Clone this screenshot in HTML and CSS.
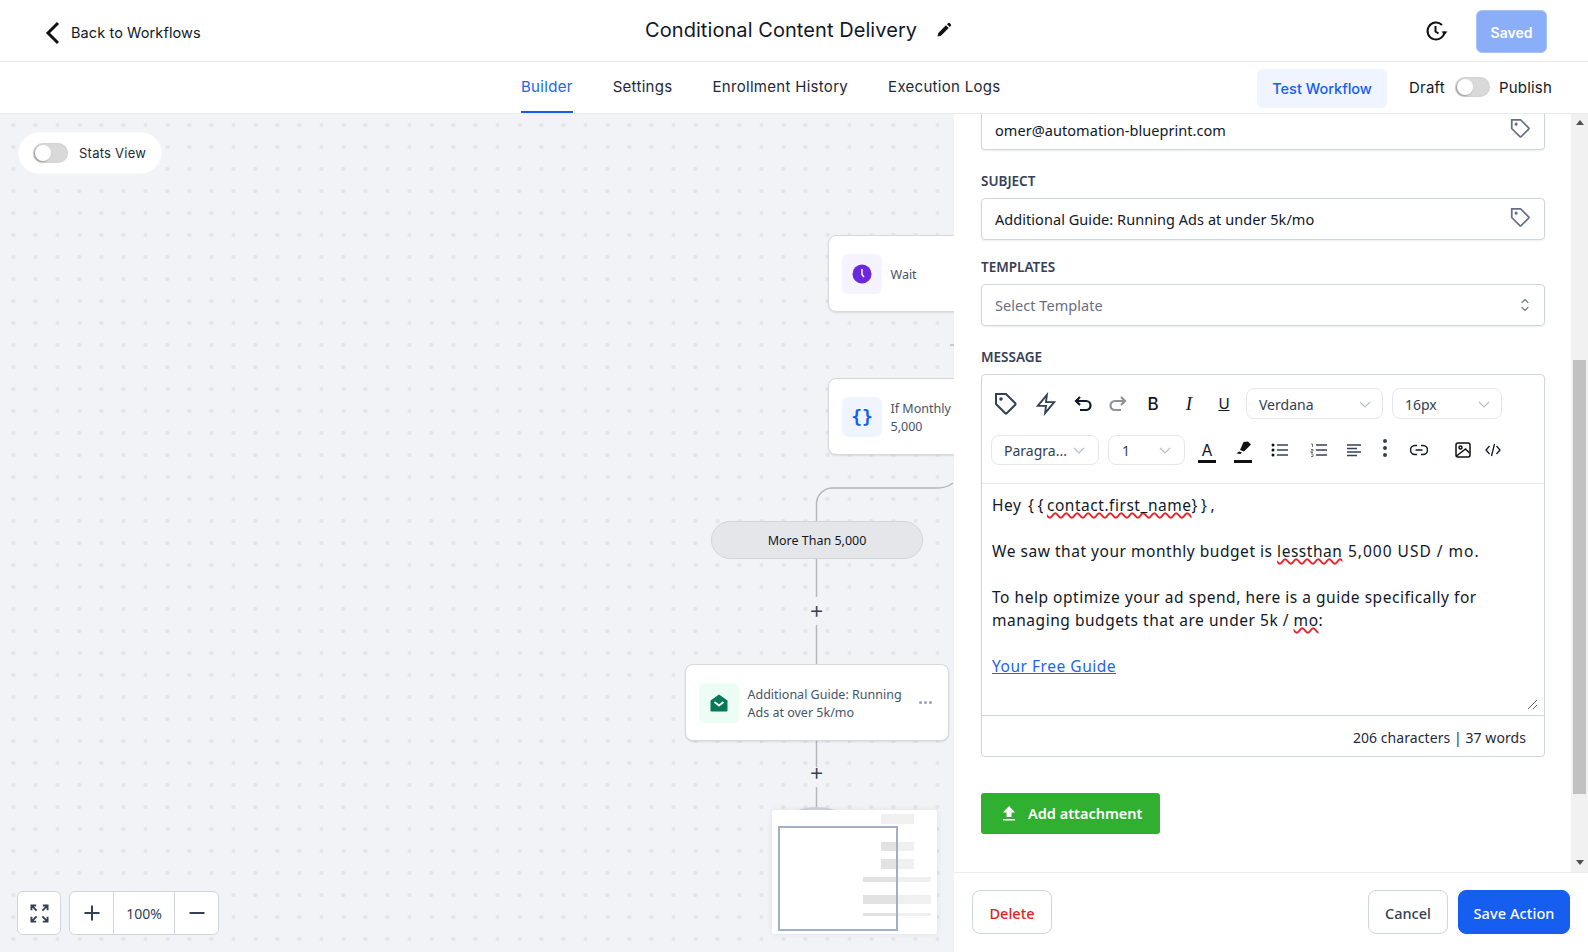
FILE: index.html
```html
<!DOCTYPE html>
<html>
<head>
	<title>Conditional Content Delivery</title>
	<link rel="stylesheet" href="styles.css">
</head>
<body>
	<header class="topbar">
		<a class="back">
			<svg width="18" height="24" viewBox="0 0 18 24" fill="none" stroke="#111" stroke-width="3"><path d="M14 2 4 12l10 10"/></svg>
			<span>Back to Workflows</span>
		</a>
		<div class="title-wrap">
			<span class="title">Conditional Content Delivery</span>
			<svg width="16" height="16" viewBox="0 0 16 16" fill="#111"><path d="M1.5 14.5 2.3 11 10 3.3l2.7 2.7L5 13.700z"/><path d="M11 2.300l1.200-1.200a1 1 0 0 1 1.400 0l1.300 1.300a1 1 0 0 1 0 1.400L13.700 5z"/></svg>
		</div>
		<div class="top-actions">
			<svg width="24" height="24" viewBox="0 0 24 24" fill="none" stroke="#111" stroke-width="2"><path d="M20.500 12.500A8.500 8.500 0 1 1 18 6"/><path d="M11.500 7v5.500l3 2"/><path d="M17.500 12.500h6l-3 3.500z" fill="#111" stroke="none"/></svg>
			<button class="btn-saved">Saved</button>
		</div>
	</header>

	<nav class="tabbar">
		<div class="tabs">
			<a class="tab active">Builder</a>
			<a class="tab">Settings</a>
			<a class="tab">Enrollment History</a>
			<a class="tab">Execution Logs</a>
		</div>
		<div class="tab-actions">
			<button class="btn-test">Test Workflow</button>
			<span class="draft">Draft</span>
			<span class="toggle"></span>
			<span class="publish">Publish</span>
		</div>
	</nav>

	<div class="main">
		<section class="canvas">
			<svg class="wires" width="954" height="838" viewBox="0 114 954 838" fill="none" stroke="#b4b7bd" stroke-width="1.500">
				<path d="M816.500 521V504a16 16 0 0 1 16-16H938c6 0 11-2 15-5"/>
				<path d="M816.500 559V597M816.500 625V664M816.500 741V767M816.500 787V808"/>
				<path d="M950 345h4"/>
			</svg>

			<div class="stats-pill">
				<span class="toggle"></span>
				<span>Stats View</span>
			</div>

			<div class="node node-wait">
				<span class="node-icon icon-purple">
					<svg width="20" height="20" viewBox="0 0 20 20"><circle cx="10" cy="10" r="9.500" fill="#6d28d9"/><path d="M10 5v5.500l2 2.500" fill="none" stroke="#fff" stroke-width="1.500"/></svg>
				</span>
				<span class="node-text">Wait</span>
			</div>

			<div class="node node-if">
				<span class="node-icon icon-blue">{}</span>
				<span class="node-text">If Monthly<br>5,000</span>
			</div>

			<div class="branch-pill">More Than 5,000</div>
			<span class="plus plus-one">+</span>

			<div class="node node-mail">
				<span class="node-icon icon-green">
					<svg width="18" height="18" viewBox="0 0 18 18"><path d="M0.500 6.500 9 0.500l8.500 6v10a1 1 0 0 1-1 1h-15a1 1 0 0 1-1-1z" fill="#047857"/><path d="M4.500 8 9 11.500 13.500 8" fill="none" stroke="#fff" stroke-width="1.800"/></svg>
				</span>
				<span class="node-text">Additional Guide: Running<br>Ads at over 5k/mo</span>
				<span class="node-menu">
					<i></i><i></i><i></i>
				</span>
			</div>
			<span class="plus plus-two">+</span>
			<span class="hidden-node"></span>

			<div class="minimap">
				<span class="mini-block b1"></span>
				<span class="mini-block b2"></span>
				<span class="mini-block b3"></span>
				<span class="mini-block b4"></span>
				<span class="mini-block b5"></span>
				<span class="mini-block b6"></span>
				<span class="mini-view"></span>
			</div>

			<div class="controls">
				<button class="ctrl ctrl-fit">
					<svg width="19" height="19" viewBox="0 0 20 20" fill="none" stroke="#344054" stroke-width="2"><path d="M1.500 6.500v-5h5M1.500 1.500l5.500 5.500M13.500 1.500h5v5M18.500 1.500 13 7M1.500 13.500v5h5M1.500 18.500 7 13M18.500 13.500v5h-5M18.500 18.500 13 13"/></svg>
				</button>
				<div class="zoom-group">
					<button class="ctrl-zoom">
						<svg width="16" height="16" viewBox="0 0 16 16" stroke="#344054" stroke-width="2"><path d="M8 0.500v15M0.500 8h15"/></svg>
					</button>
					<span class="zoom-val">100%</span>
					<button class="ctrl-zoom">
						<svg width="16" height="16" viewBox="0 0 16 16" stroke="#344054" stroke-width="2"><path d="M0.500 8h15"/></svg>
					</button>
				</div>
			</div>
		</section>

		<aside class="panel">
			<div class="panel-scroll">
				<div class="form">
					<div class="input input-cut">
						<span>omer@automation-blueprint.com</span>
						<svg class="tag" width="21" height="21" viewBox="0 0 24 24" fill="none" stroke="#667085" stroke-width="2"><path d="M12 2H2v10l9.300 9.300a1 1 0 0 0 1.400 0l8.600-8.600a1 1 0 0 0 0-1.400z"/><circle cx="7" cy="7" r="0.800" fill="#667085"/></svg>
					</div>
					<label class="field-label label-first">SUBJECT</label>
					<div class="input">
						<span>Additional Guide: Running Ads at under 5k/mo</span>
						<svg class="tag" width="21" height="21" viewBox="0 0 24 24" fill="none" stroke="#667085" stroke-width="2"><path d="M12 2H2v10l9.300 9.300a1 1 0 0 0 1.400 0l8.600-8.600a1 1 0 0 0 0-1.400z"/><circle cx="7" cy="7" r="0.800" fill="#667085"/></svg>
					</div>
					<label class="field-label">TEMPLATES</label>
					<div class="input input-select">
						<span class="placeholder">Select Template</span>
						<svg width="10" height="16" viewBox="0 0 12 18" fill="none" stroke="#667085" stroke-width="1.500"><path d="M2 6.500 6 2.500l4 4M2 11.500l4 4 4-4"/></svg>
					</div>
					<label class="field-label label-msg">MESSAGE</label>

					<div class="editor">
						<div class="toolbar">
							<div class="tool-row">
								<svg class="tool t-tag" width="24" height="24" viewBox="0 0 24 24" fill="none" stroke="#344054" stroke-width="2"><path d="M12 2H2v10l9.300 9.300a1 1 0 0 0 1.400 0l8.600-8.600a1 1 0 0 0 0-1.400z"/><circle cx="7" cy="7" r="0.800" fill="#344054"/></svg>
								<svg class="tool t-bolt" width="22" height="24" viewBox="0 0 24 24" fill="none" stroke="#344054" stroke-width="2"><path d="M13 2 3 14h9l-1 8 10-12h-9z"/></svg>
								<svg class="tool t-undo" width="20" height="20" viewBox="0 0 20 20" fill="none" stroke="#111827" stroke-width="2.200"><path d="M7 3 3 7l4 4M3 7h10a4.500 4.500 0 0 1 0 9H7"/></svg>
								<svg class="tool t-redo" width="20" height="20" viewBox="0 0 20 20" fill="none" stroke="#8e9196" stroke-width="2.200"><path d="M13 3l4 4-4 4M17 7H7a4.500 4.500 0 0 0 0 9h6"/></svg>
								<span class="tool-b">B</span>
								<span class="tool-i">I</span>
								<span class="tool-u">U</span>
								<span class="select sel-font">Verdana<svg class="chev" width="12" height="7" viewBox="0 0 12 7" fill="none" stroke="#b9bec7" stroke-width="1.200"><path d="M1 1l5 5 5-5"/></svg></span>
								<span class="select sel-size">16px<svg class="chev" width="12" height="7" viewBox="0 0 12 7" fill="none" stroke="#b9bec7" stroke-width="1.200"><path d="M1 1l5 5 5-5"/></svg></span>
							</div>
							<div class="tool-row row-two">
								<span class="select sel-para">Paragra...<svg class="chev" width="12" height="7" viewBox="0 0 12 7" fill="none" stroke="#b9bec7" stroke-width="1.200"><path d="M1 1l5 5 5-5"/></svg></span>
								<span class="select sel-line">1<svg class="chev" width="12" height="7" viewBox="0 0 12 7" fill="none" stroke="#b9bec7" stroke-width="1.200"><path d="M1 1l5 5 5-5"/></svg></span>
								<span class="tool-a">A</span>
								<span class="tool-mark">
									<svg width="18" height="14" viewBox="0 0 18 14" fill="#111"><path d="M9.500 1 14 0.500 17 3.500l-7 7-4-1.500zM5 10.500l3 1-1.500 1.500-4-0.500z"/></svg>
								</span>
								<svg class="tool t-list" width="18" height="14" viewBox="0 0 18 14"><circle cx="2" cy="2" r="1.500" fill="#111"/><circle cx="2" cy="7" r="1.500" fill="#111"/><circle cx="2" cy="12" r="1.500" fill="#111"/><path d="M6 2h11M6 7h11M6 12h11" stroke="#344054" stroke-width="1.500"/></svg>
								<svg class="tool t-num" width="18" height="14" viewBox="0 0 18 14"><path d="M1 1h1.500v3M1 6.500h2v1.500H1v1.500h2M1 11h2v2.500H1" fill="none" stroke="#555" stroke-width="0.800"/><path d="M6 2h11M6 7h11M6 12h11" stroke="#344054" stroke-width="1.500"/></svg>
								<svg class="tool t-align" width="16" height="14" viewBox="0 0 16 14" stroke="#344054" stroke-width="1.500"><path d="M1 2h14M1 5.500h10M1 9h14M1 12.500h10"/></svg>
								<svg class="tool t-dots" width="6" height="18" viewBox="0 0 6 18" fill="#344054"><circle cx="3" cy="2" r="2"/><circle cx="3" cy="9" r="2"/><circle cx="3" cy="16" r="2"/></svg>
								<svg class="tool t-link" width="18" height="12" viewBox="0 0 18 12" fill="none" stroke="#111827" stroke-width="1.500"><path d="M7 1.500H5a4.500 4.500 0 0 0 0 9h2M11 1.500h2a4.500 4.500 0 0 1 0 9h-2M5.500 6h7"/></svg>
								<svg class="tool t-image" width="16" height="16" viewBox="0 0 16 16" fill="none" stroke="#111" stroke-width="1.500"><rect x="1" y="1" width="14" height="14" rx="2"/><circle cx="5.500" cy="5.500" r="1.500"/><path d="M1.500 14 10.500 7l4 4"/></svg>
								<svg class="tool t-code" width="16" height="14" viewBox="0 0 16 14" fill="none" stroke="#111827" stroke-width="1.300"><path d="M4.500 3 1 7l3.500 4M11.500 3 15 7l-3.500 4M9.500 1l-3 12"/></svg>
							</div>
						</div>
						<div class="editor-body">
							<p>Hey <span class="braces first">{{</span><span class="typo">contact.first_name</span><span class="braces">}},</span></p>
							<p>&nbsp;</p>
							<p>We saw that your monthly budget is <span class="typo">lessthan</span> <span class="wide">5,000 USD / mo.</span></p>
							<p>&nbsp;</p>
							<p>To help optimize your ad spend, here is a guide specifically for<br>managing budgets that are under 5k / <span class="typo">mo</span>:</p>
							<p>&nbsp;</p>
							<p><a class="editor-link">Your Free Guide</a></p>
							<svg class="resize" width="12" height="12" viewBox="0 0 12 12" stroke="#666" stroke-width="1"><path d="M2 11 11 2M7 11l4-4"/></svg>
						</div>
						<div class="counter">206 characters | 37 words</div>
					</div>

					<button class="btn-attach">
						<svg width="14" height="16" viewBox="0 0 14 16" fill="#fff"><path d="M7 1 1 7.500h3.500V12h5V7.500H13zM1 14h12v1.500H1z"/></svg>
						Add attachment
					</button>
				</div>
				<div class="scrollbar">
					<span class="arrow-up"></span>
					<span class="thumb"></span>
					<span class="arrow-down"></span>
				</div>
			</div>
			<footer class="panel-foot">
				<button class="btn-delete">Delete</button>
				<div class="foot-right">
					<button class="btn-cancel">Cancel</button>
					<button class="btn-save">Save Action</button>
				</div>
			</footer>
		</aside>
	</div>
</body>
</html>
```

FILE: styles.css
```css
html, body {
	margin: 0;
	padding: 0;
	width: 1588px;
	height: 952px;
	overflow: hidden;
	background: #fff;
	font-family: "Inter", sans-serif;
	color: #111827;
}
button {
	font-family: inherit;
	cursor: pointer;
}

/* top bar */
.topbar {
	height: 61px;
	border-bottom: 1px solid #e9eaec;
	display: flex;
	align-items: center;
	justify-content: space-between;
	padding: 0 41px 0 44px;
	position: relative;
}
.back {
	display: flex;
	align-items: center;
	gap: 9px;
	margin-top: 4px;
	font-size: 14.500px;
	letter-spacing: 0.1px;
}
.title-wrap {
	position: absolute;
	left: 645px;
	top: 17px;
	display: flex;
	align-items: center;
	gap: 19px;
}
.title {
	font-size: 20px;
	line-height: 26px;
	letter-spacing: 0.07px;
}
.top-actions {
	display: flex;
	align-items: center;
	gap: 28px;
}
.btn-saved {
	width: 71px;
	height: 43px;
	margin-top: 2px;
	border: 1px solid #a9c3f9;
	border-radius: 6px;
	background: #8aaef8;
	color: #fff;
	font-size: 14px;
	font-weight: 600;
	padding-top: 3px;
}

/* tabs */
.tabbar {
	height: 51px;
	border-bottom: 1px solid #e9eaec;
	display: flex;
	justify-content: space-between;
	padding: 0 36px 0 521px;
}
.tabs {
	display: flex;
	gap: 40px;
}
.tab {
	font-size: 15px;
	letter-spacing: 0.3px;
	padding-top: 15px;
	height: 36px;
	color: #1d2939;
}
.tab.active {
	color: #2563eb;
	border-bottom: 2px solid #155eef;
	height: 34px;
}
.tab-actions {
	display: flex;
	align-items: center;
	height: 50px;
}
.btn-test {
	width: 130px;
	height: 39px;
	margin: 3px 22px 0 0;
	border: none;
	border-radius: 6px;
	background: #eff4ff;
	color: #155eef;
	font-size: 14.500px;
	font-weight: 500;
}
.draft, .publish {
	font-size: 15px;
	letter-spacing: 0.2px;
}
.tab-actions .toggle {
	margin: 0 9px 0 10px;
}
.toggle {
	display: inline-block;
	position: relative;
	width: 35px;
	height: 20px;
	border-radius: 10px;
	background: #d9d9d9;
	box-shadow: inset 0 0 2px rgba(0,0,0,.1);
	flex: none;
}
.toggle::after {
	content: "";
	position: absolute;
	left: 2px;
	top: 2px;
	width: 16px;
	height: 16px;
	border-radius: 50%;
	background: #fff;
	box-shadow: -1px 1px 2px rgba(0,0,0,.3);
}

.main {
	display: flex;
	height: 838px;
}

/* canvas */
.canvas {
	position: relative;
	width: 954px;
	flex: none;
	overflow: hidden;
	background-color: #f2f3f7;
	background-image: radial-gradient(circle, #e3e4e8 1.500px, transparent 2.500px);
	background-size: 22px 22px;
	background-position: 2.500px 0;
}
.wires {
	position: absolute;
	left: 0;
	top: 0;
}
.stats-pill {
	position: absolute;
	left: 18px;
	top: 18px;
	width: 144px;
	height: 42px;
	box-sizing: border-box;
	padding-left: 14px;
	display: flex;
	align-items: center;
	gap: 11px;
	background: #fff;
	border: 1px solid #fafbfc;
	border-radius: 21px;
	font-size: 13px;
	letter-spacing: 0.25px;
	color: #1d2939;
}
.node {
	position: absolute;
	height: 77px;
	box-sizing: border-box;
	display: flex;
	align-items: center;
	padding-left: 13px;
	gap: 8.500px;
	background: #fff;
	border: 1px solid #d6d8dc;
	border-radius: 8px;
	box-shadow: 0 1px 2px rgba(16,24,40,.1);
	font-family: "Noto Sans", sans-serif;
	font-size: 12.500px;
	line-height: 18px;
	color: #475467;
}
.node-text {
	padding-top: 2px;
}
.node-wait { left: 828px; top: 121px; width: 140px; }
.node-if { left: 828px; top: 264px; width: 140px; }
.node-mail { left: 685px; top: 550px; width: 264px; }
.node-icon {
	width: 40px;
	height: 40px;
	border-radius: 6px;
	flex: none;
	display: flex;
	align-items: center;
	justify-content: center;
}
.icon-purple { background: #f5f3ff; }
.icon-blue {
	background: #eff4ff;
	color: #155eef;
	font-family: "DejaVu Sans Mono", monospace;
	font-size: 18px;
	font-weight: bold;
}
.icon-green { background: #ecfdf5; }
.node-menu {
	position: absolute;
	left: 233px;
	top: 36px;
	display: flex;
	gap: 2px;
}
.node-menu i {
	width: 3px;
	height: 3px;
	border-radius: 50%;
	background: #98a2b3;
}
.branch-pill {
	position: absolute;
	left: 711px;
	top: 407px;
	width: 212px;
	height: 38px;
	box-sizing: border-box;
	border: 1px solid #d2d5da;
	border-radius: 19px;
	background: #e5e6ea;
	font-family: "Noto Sans", sans-serif;
	font-size: 12.500px;
	line-height: 37px;
	text-align: center;
	color: #101828;
}
.plus {
	position: absolute;
	left: 806px;
	width: 21px;
	text-align: center;
	font-size: 24px;
	line-height: 24px;
	font-weight: 300;
	color: #344054;
}
.plus-one { top: 484px; }
.plus-two { top: 646px; }
.hidden-node {
	position: absolute;
	left: 795px;
	top: 693px;
	width: 43px;
	height: 14px;
	border-radius: 50% 50% 0 0;
	background: #d0d3d9;
}
.minimap {
	position: absolute;
	left: 772px;
	top: 696px;
	width: 165px;
	height: 124px;
	background: #fff;
	border-radius: 3px;
	box-shadow: 0 0 6px rgba(16,24,40,.08);
}
.mini-block {
	position: absolute;
}
.b1 { left: 109px; top: 4px; width: 33px; height: 10px; background: #f0f0f0; }
.b2 { left: 109px; top: 32px; width: 33px; height: 9px; background: linear-gradient(90deg, #e2e2e2 16px, #f0f0f0 16px); }
.b3 { left: 109px; top: 49px; width: 33px; height: 10px; background: linear-gradient(90deg, #e2e2e2 16px, #f0f0f0 16px); }
.b4 { left: 91px; top: 67px; width: 68px; height: 5px; background: linear-gradient(90deg, #e2e2e2 34px, #f0f0f0 34px); }
.b5 { left: 91px; top: 85px; width: 68px; height: 9px; background: linear-gradient(90deg, #e2e2e2 34px, #f0f0f0 34px); }
.b6 { left: 91px; top: 103px; width: 68px; height: 3px; background: linear-gradient(90deg, #e2e2e2 34px, #f0f0f0 34px); }
.mini-view {
	position: absolute;
	left: 6px;
	top: 16px;
	width: 120px;
	height: 105px;
	box-sizing: border-box;
	border: 2px solid #a3afc4;
}
.controls {
	position: absolute;
	left: 17px;
	top: 777px;
	display: flex;
	gap: 8px;
}
.ctrl-fit {
	width: 44px;
	height: 44px;
	padding: 0;
	display: flex;
	align-items: center;
	justify-content: center;
	background: #fff;
	border: 1px solid #d0d5dd;
	border-radius: 6px;
}
.zoom-group {
	display: flex;
	height: 44px;
	box-sizing: border-box;
	background: #fff;
	border: 1px solid #d0d5dd;
	border-radius: 6px;
}
.ctrl-zoom {
	width: 43px;
	padding: 0;
	border: none;
	background: none;
	display: flex;
	align-items: center;
	justify-content: center;
}
.zoom-val {
	width: 60px;
	border-left: 1px solid #d0d5dd;
	border-right: 1px solid #d0d5dd;
	font-family: "Noto Sans", sans-serif;
	font-size: 14px;
	line-height: 44px;
	text-align: center;
	color: #344054;
}

/* right panel */
.panel {
	width: 634px;
	flex: none;
	display: flex;
	flex-direction: column;
	background: #fff;
	font-family: "Noto Sans", sans-serif;
}
.panel-scroll {
	height: 758px;
	display: flex;
}
.form {
	width: 617px;
	box-sizing: border-box;
	padding: 0 26px 0 27px;
	overflow: hidden;
}
.input {
	height: 42px;
	box-sizing: border-box;
	display: flex;
	align-items: center;
	justify-content: space-between;
	padding: 0 13px;
	border: 1px solid #d0d5dd;
	border-radius: 4px;
	box-shadow: 0 1px 2px rgba(16,24,40,.08);
	font-size: 14.500px;
	letter-spacing: 0.05px;
	color: #101828;
}
.input-cut {
	height: 36px;
	padding-bottom: 3px;
	border-top: none;
	border-radius: 0 0 4px 4px;
}
.input-select {
	padding-right: 14px;
}
.tag {
	margin-bottom: 4px;
}
.placeholder {
	color: #667085;
}
.field-label {
	display: block;
	margin: 18px 0 8px;
	font-size: 13.500px;
	line-height: 18px;
	font-weight: 600;
	color: #344054;
}
.label-first, .label-msg {
	margin-top: 22px;
}
.editor {
	height: 383px;
	box-sizing: border-box;
	border: 1px solid #d0d5dd;
	border-radius: 4px;
	display: flex;
	flex-direction: column;
}
.toolbar {
	height: 109px;
	flex: none;
	box-sizing: border-box;
	border-bottom: 1px solid #e9eaec;
	padding: 13px 0 0 9px;
}
.tool-row {
	display: flex;
	align-items: center;
	height: 31px;
}
.row-two {
	margin-top: 16px;
	height: 30px;
}
.tool {
	flex: none;
}
.t-tag { margin-left: 3px; }
.t-bolt { margin-left: 17px; }
.t-undo { margin-left: 16px; }
.t-redo { margin-left: 15px; }
.tool-b, .tool-i, .tool-u {
	width: 18px;
	margin-left: 16px;
	text-align: center;
	font-family: "Inter", sans-serif;
	font-size: 17px;
	font-weight: 500;
}
.tool-b { margin-left: 16px; }
.tool-i {
	margin-left: 18px;
	font-family: "Liberation Serif", serif;
	font-style: italic;
	font-size: 19px;
}
.tool-u {
	margin-left: 17px;
	text-decoration: underline;
	font-size: 15px;
	font-weight: 400;
}
.select {
	display: flex;
	align-items: center;
	justify-content: space-between;
	box-sizing: border-box;
	height: 100%;
	padding: 0 13px 0 12px;
	border: 1px solid #e4e7ec;
	border-radius: 8px;
	font-size: 14px;
	color: #344054;
}
.sel-font { width: 137px; margin-left: 13px; padding: 1px 11px 0 12px; }
.sel-size { width: 110px; margin-left: 9px; padding: 1px 11px 0 12px; }
.sel-para { width: 108px; }
.sel-line { width: 77px; margin-left: 9px; padding-left: 13px; }
.tool-a {
	width: 18px;
	margin-left: 13px;
	text-align: center;
	font-family: "Inter", sans-serif;
	font-size: 16px;
	line-height: 19px;
	border-bottom: 3px solid #111;
	margin-top: 4px;
}
.tool-mark {
	width: 18px;
	margin-left: 18px;
	height: 19px;
	border-bottom: 3px solid #111;
	margin-top: 4px;
	line-height: 0;
}
.t-list { margin-left: 19px; }
.t-num { margin-left: 21px; }
.t-align { margin-left: 18px; }
.t-dots { margin: -4px 0 0 20px; }
.t-link { margin-left: 22px; }
.t-image { margin-left: 27px; }
.t-code { margin-left: 14px; }
.editor-body {
	position: relative;
	flex: 1;
	padding: 10px 10px 0;
	font-size: 15.500px;
	line-height: 23px;
	letter-spacing: 0.530px;
	color: #111827;
}
.editor-body p {
	margin: 0;
}
.braces {
	letter-spacing: 3.600px;
}
.braces.first {
	margin-left: 2px;
}
.wide {
	margin-left: 1px;
	letter-spacing: 1px;
}
.typo {
	text-decoration: underline wavy #e5252a 1.500px;
	text-underline-offset: 1px;
}
.editor-link {
	color: #2563eb;
	text-decoration: underline;
}
.resize {
	position: absolute;
	right: 6px;
	bottom: 5px;
}
.counter {
	height: 40px;
	flex: none;
	border-top: 1px solid #d0d5dd;
	padding-right: 18px;
	font-size: 14px;
	letter-spacing: 0.07px;
	line-height: 44px;
	text-align: right;
	color: #1f2937;
}
.btn-attach {
	display: flex;
	align-items: center;
	gap: 12px;
	margin-top: 36px;
	width: 179px;
	height: 41px;
	padding: 0 0 2px 21px;
	border: none;
	border-radius: 3px;
	background: #31af31;
	color: #fff;
	font-family: inherit;
	font-size: 14.500px;
	font-weight: 600;
}
.scrollbar {
	width: 17px;
	flex: none;
	background: #f1f1f1;
	display: flex;
	flex-direction: column;
	align-items: center;
}
.arrow-up, .arrow-down {
	width: 0;
	height: 0;
	border-left: 4px solid transparent;
	border-right: 4px solid transparent;
}
.arrow-up {
	margin-top: 6px;
	border-bottom: 5px solid #505050;
}
.arrow-down {
	margin-top: 66px;
	border-top: 5px solid #505050;
}
.thumb {
	width: 13px;
	height: 434px;
	margin-top: 235px;
	background: #c1c1c1;
}
.panel-foot {
	flex: 1;
	border-top: 1px solid #e9eaec;
	display: flex;
	justify-content: space-between;
	align-items: flex-start;
	padding: 17px 18px 0;
}
.foot-right {
	display: flex;
	gap: 10px;
}
.panel-foot button {
	height: 44px;
	border-radius: 8px;
	font-family: inherit;
	font-size: 14.500px;
	font-weight: 500;
	padding: 2px 0 0;
}
.btn-delete {
	width: 80px;
	background: #fff;
	border: 1px solid #d0d5dd;
	color: #e02424;
}
.btn-cancel {
	width: 80px;
	background: #fff;
	border: 1px solid #d0d5dd;
	color: #344054;
}
.btn-save {
	width: 112px;
	background: #155eef;
	border: 1px solid #155eef;
	color: #fff;
	letter-spacing: 0.1px;
}
```
